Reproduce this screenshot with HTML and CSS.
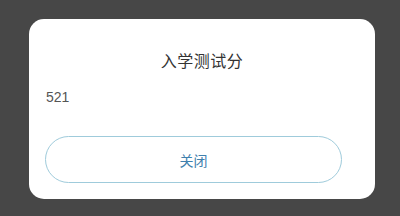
FILE: index.html
```html
<!DOCTYPE html>
<html lang="zh">
<head>
<meta charset="utf-8">
<link rel="stylesheet" href="styles.css">
</head>
<body>
<div class="dialog">
  <div class="title">入学测试分</div>
  <div class="value">521</div>
  <button class="close">关闭</button>
</div>
</body>
</html>
```
FILE: styles.css
```css
html, body {
  margin: 0;
  padding: 0;
  background: #474747;
  width: 400px;
  height: 216px;
  overflow: hidden;
}
body {
  padding: 19px 0 0 29px;
  box-sizing: border-box;
  font-family: "Liberation Sans", "Noto Sans CJK SC", sans-serif;
}
.dialog {
  width: 346px;
  height: 180px;
  box-sizing: border-box;
  background: #fff;
  border-radius: 15px;
  padding: 29px 33px 16px 16px;
  display: flex;
  flex-direction: column;
}
.title {
  font-family: "Noto Sans CJK SC", sans-serif;
  font-size: 16px;
  line-height: 24px;
  letter-spacing: 0.5px;
  color: #333;
  text-align: center;
  padding-left: 17px;
}
.value {
  margin-top: 15px;
  padding-left: 1px;
  font-size: 14px;
  line-height: 20px;
  color: #555;
}
.close {
  margin-top: 29px;
  height: 47px;
  width: 297px;
  box-sizing: border-box;
  border: 1.5px solid #9fcbdb;
  border-radius: 24px;
  background: #fff;
  color: #3f80ad;
  font-family: "Noto Sans CJK SC", sans-serif;
  font-size: 14px;
  padding: 0;
  cursor: pointer;
}
```
